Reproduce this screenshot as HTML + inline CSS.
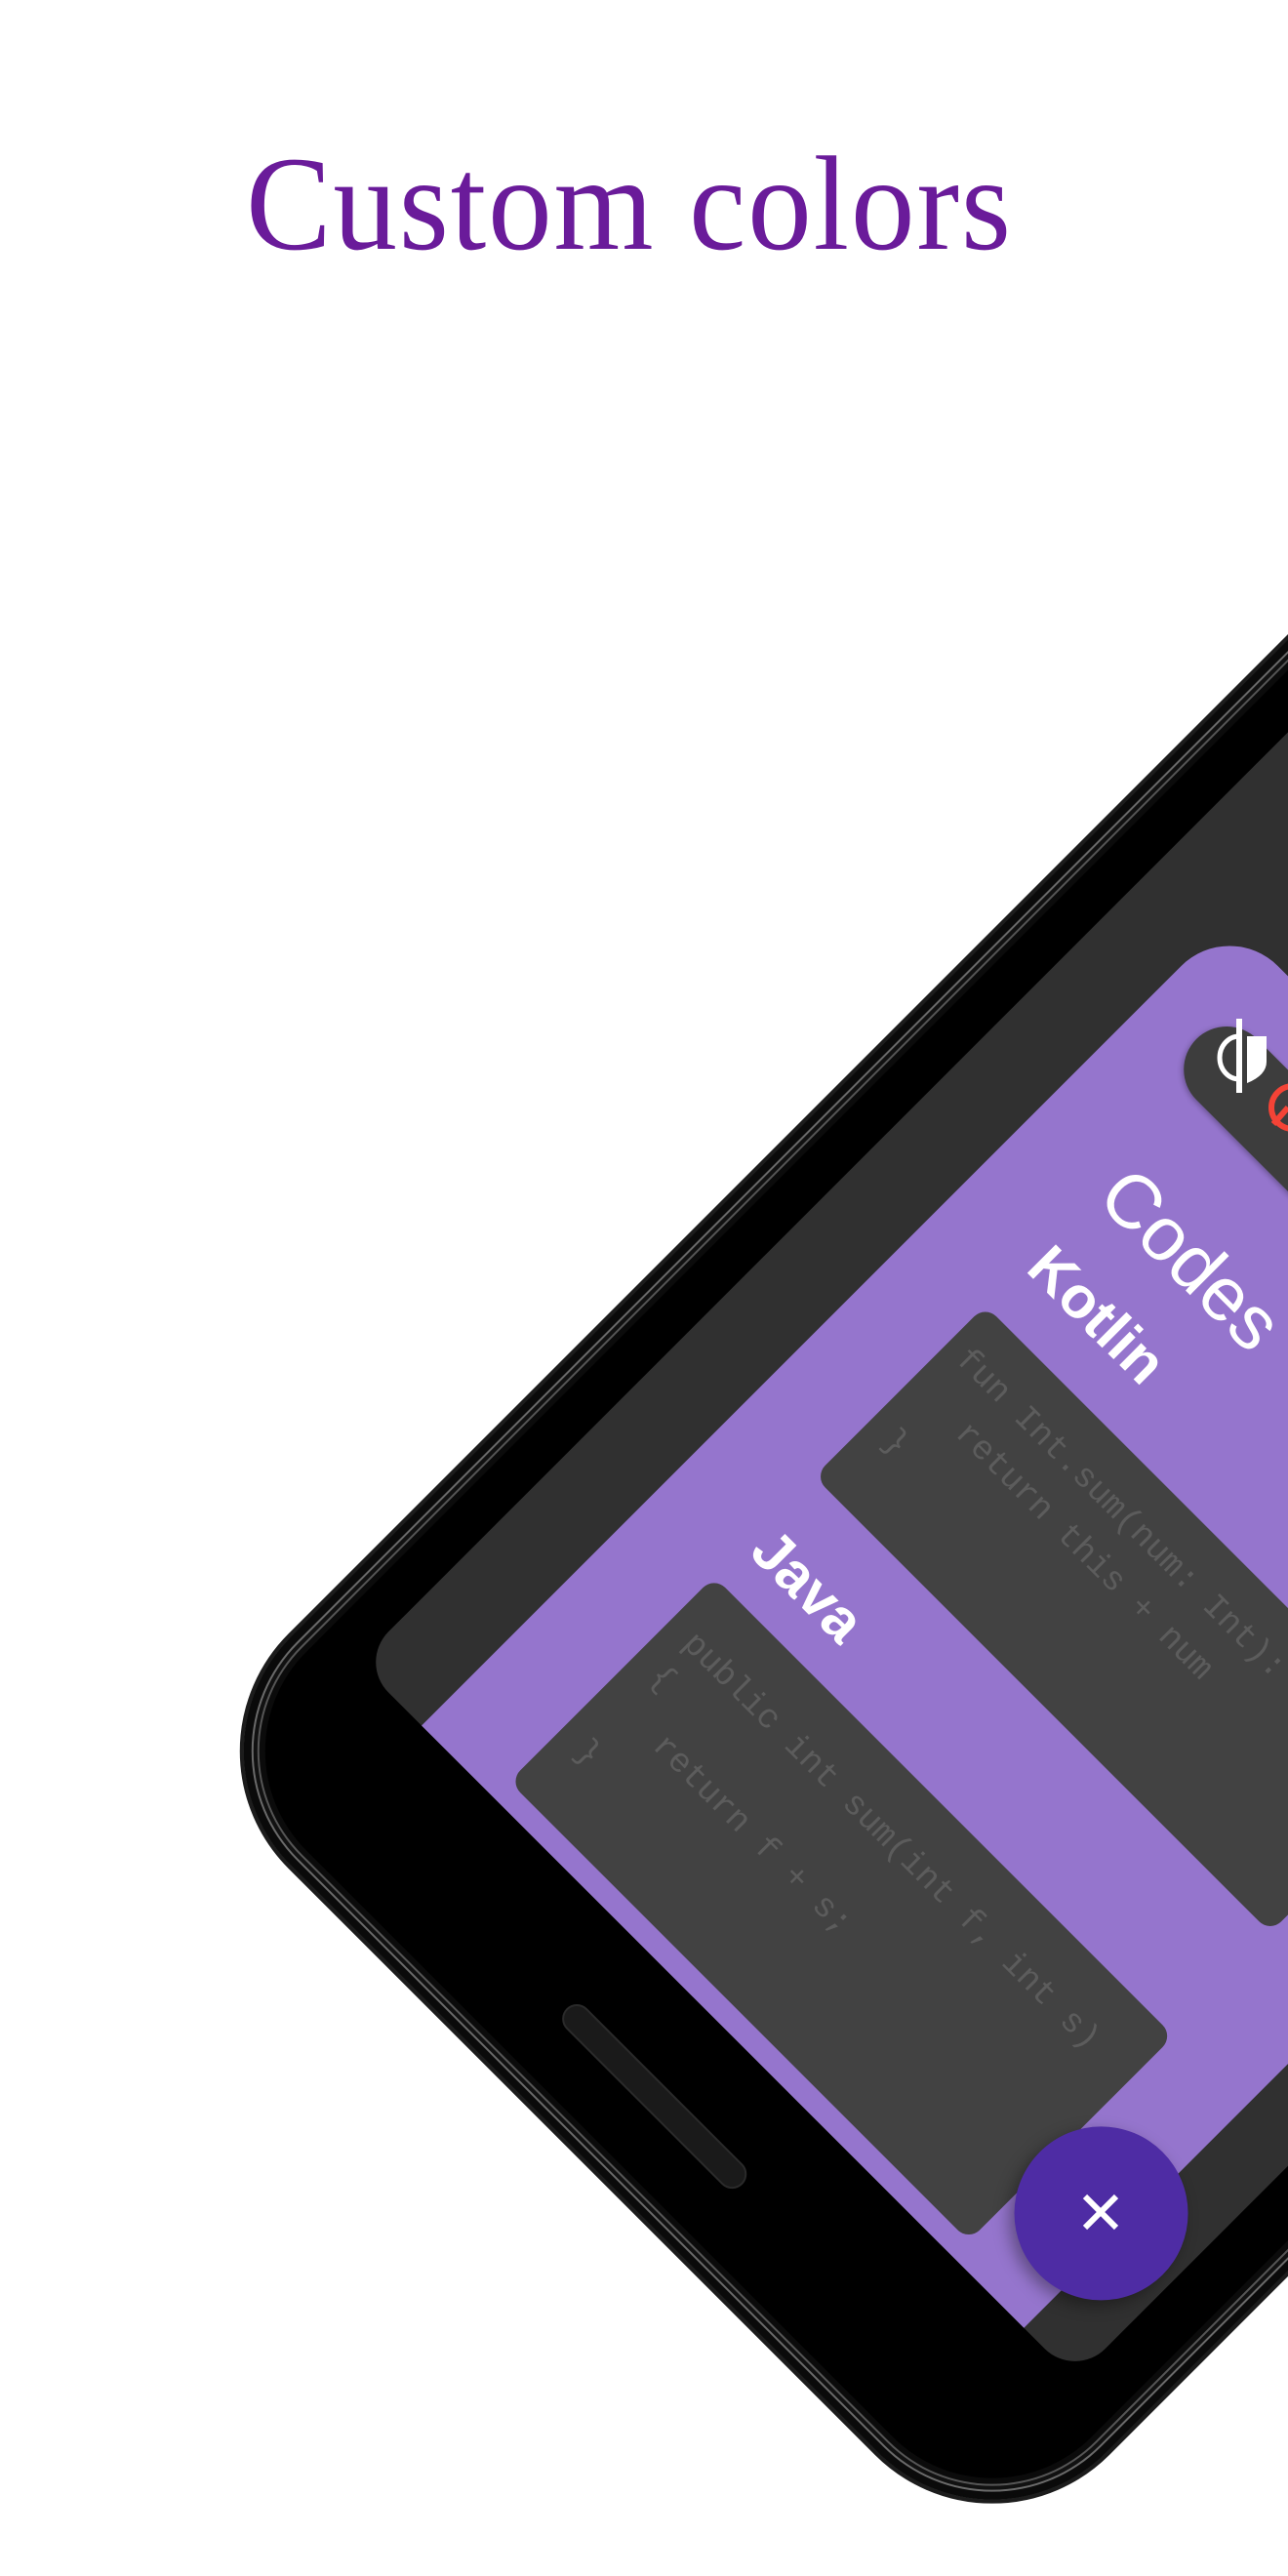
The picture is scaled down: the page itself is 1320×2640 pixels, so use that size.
<!DOCTYPE html>
<html><head><meta charset="utf-8"><style>
html,body{margin:0;padding:0;background:#fff;width:1320px;height:2640px;overflow:hidden;position:relative}
.title{position:absolute;left:0;width:1290px;text-align:center;top:140px;font-family:"Liberation Serif",serif;font-size:138px;color:#6a1b9a;line-height:1;letter-spacing:2px;transform:scaleX(0.95);transform-origin:645px 0}
.rot{position:absolute;left:0;top:0;width:0;height:0;transform-origin:0 0;transform:rotate(45deg)}
.abs{position:absolute}
.phone{left:1393px;top:-2000px;width:1190px;height:3145px;background:#000;border-radius:170px;box-sizing:border-box;border:4px solid #1c1c1c;box-shadow:inset 0 0 0 8px #0a0a0a,inset 0 0 0 10px #6a6a6a,inset 0 0 0 14px #111,inset 0 0 0 16px #555,inset 0 0 0 22px #0b0b0b}
.screen{left:1464px;top:-1600px;width:1039px;height:2545px;background:#303030;border-radius:44px}
.purple{left:1556px;top:-226px;width:873px;height:1171px;background:#9575cd;border-top-left-radius:70px}
.pill{left:1620px;top:-158px;width:900px;height:88px;background:#3d3d3d;border-radius:44px;box-shadow:0 2px 6px rgba(0,0,0,.3)}
.h{font-family:"Liberation Sans",sans-serif;color:#fff;white-space:nowrap;line-height:1}
.card{background:#424242;border-radius:16px}
.code{font-family:"Liberation Mono",monospace;color:#5c5c5c;font-size:35px;white-space:pre;line-height:1}
.fab{left:2313px;top:717px;width:178px;height:178px;border-radius:50%;background:#4e2ca4;box-shadow:0 8px 16px rgba(0,0,0,.35)}
.spk{left:1866px;top:1030px;width:255px;height:30px;border-radius:15px;background:#1a1a1a;border:2px solid #2a2a2a;box-sizing:border-box}
</style></head><body>
<div class="title">Custom colors</div>
<div class="rot">
  <div class="abs phone"></div>
  <div class="abs screen"></div>
  <div class="abs purple"></div>
  <div class="abs pill"></div>
  <div class="abs h" style="left:1663px;top:10px;font-size:78px">Codes</div>
  <div class="abs h" style="left:1663px;top:128px;font-size:60px;font-weight:bold">Kotlin</div>
  <div class="abs card" style="left:1660px;top:232px;width:661px;height:248px"></div>
  <div class="abs code" style="left:1678px;top:268px">fun Int.sum(num: Int): Int{</div>
  <div class="abs code" style="left:1731px;top:322px">return this + num</div>
  <div class="abs code" style="left:1684px;top:380px">}</div>
  <div class="abs h" style="left:1668px;top:534px;font-size:60px;font-weight:bold">Java</div>
  <div class="abs card" style="left:1660px;top:625px;width:666px;height:297px"></div>
  <div class="abs code" style="left:1686px;top:672px">public int sum(int f, int s)</div>
  <div class="abs code" style="left:1686px;top:720px">{</div>
  <div class="abs code" style="left:1738px;top:768px">return f + s;</div>
  <div class="abs code" style="left:1686px;top:828px">}</div>
  <div class="abs fab"></div>
  <div class="abs spk"></div>
</div>
<svg class="abs" style="left:1240px;top:1040px" width="80" height="90" viewBox="0 0 80 90">
  <path d="M30 22 A20 22 0 0 0 30 66 Z" fill="none" stroke="#fff" stroke-width="5"/>
  <rect x="27" y="4" width="6" height="76" fill="#fff"/>
  <path d="M38 22 L58 22 L58 48 Q58 62 38 70 Z" fill="#fff"/>
</svg>
<svg class="abs" style="left:1295px;top:1110px" width="25" height="60" viewBox="0 0 25 60">
  <circle cx="30" cy="25" r="22" fill="none" stroke="#f44336" stroke-width="6"/>
  <path d="M10 42 L25 25" stroke="#f44336" stroke-width="6"/>
</svg>
<svg class="abs" style="left:1108px;top:2247px" width="40" height="40" viewBox="0 0 40 40">
  <path d="M4 4 L36 36 M36 4 L4 36" stroke="#fff" stroke-width="6"/>
</svg>
</body></html>
